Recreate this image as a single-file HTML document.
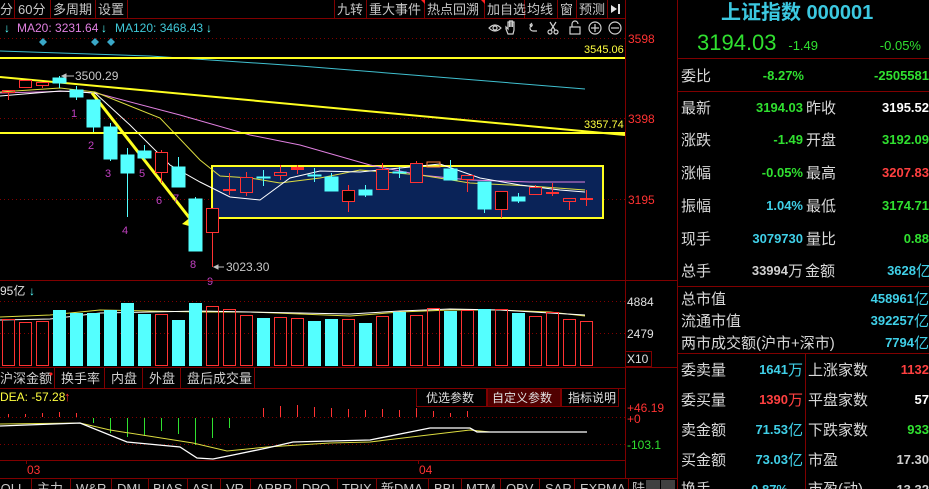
<!DOCTYPE html>
<html><head><meta charset="utf-8"><style>
html,body{margin:0;padding:0;background:#000;width:929px;height:489px;overflow:hidden}
svg{display:block}
text{font-family:"Liberation Sans","Noto Sans CJK SC",sans-serif}
</style></head><body>
<svg width="929" height="489" viewBox="0 0 929 489" xmlns="http://www.w3.org/2000/svg">
<rect width="929" height="489" fill="#000"/>
<!-- toolbar -->
<g stroke="#800000" stroke-width="1" fill="none">
<line x1="0" y1="18.5" x2="625" y2="18.5"/>
<line x1="14.5" y1="0" x2="14.5" y2="18"/><line x1="50.5" y1="0" x2="50.5" y2="18"/><line x1="95.5" y1="0" x2="95.5" y2="18"/><line x1="127.5" y1="0" x2="127.5" y2="18"/>
<line x1="334.5" y1="0" x2="334.5" y2="18"/><line x1="366.5" y1="0" x2="366.5" y2="18"/><line x1="424.5" y1="0" x2="424.5" y2="18"/><line x1="484.5" y1="0" x2="484.5" y2="18"/><line x1="524.5" y1="0" x2="524.5" y2="18"/><line x1="557.5" y1="0" x2="557.5" y2="18"/><line x1="576.5" y1="0" x2="576.5" y2="18"/><line x1="607.5" y1="0" x2="607.5" y2="18"/>
<line x1="625.5" y1="0" x2="625.5" y2="478"/>
<line x1="677.5" y1="0" x2="677.5" y2="489"/>
</g>
<g fill="#c8c8c8" font-size="13">
<text x="0" y="14">分</text><text x="18" y="14">60分</text><text x="53" y="14">多周期</text><text x="98" y="14">设置</text>
<text x="337" y="14">九转</text><text x="369" y="14">重大事件</text><text x="427" y="14">热点回溯</text><text x="487" y="14">加自选</text><text x="527" y="14">均线</text><text x="560" y="14">窗</text><text x="579" y="14">预测</text>
</g>
<path d="M421 0 l4 0 l0 4z M481 0 l4 0 l0 4z" fill="#ff2020"/>
<path d="M611 5 l6 4 l-6 4z M618 4 h2 v10 h-2z" fill="#e0e0e0"/>
<!-- icons -->
<g stroke="#d0d0d0" stroke-width="1.2" fill="none">
<path d="M489 28 q6 -6 12 0 q-6 6 -12 0z"/><circle cx="495" cy="28" r="2"/>
<path d="M508 34 l-2 -5 v-2 l2 2 v-7 h1.5 v5 v-6 h1.5 v6 v-6 h1.5 v6 v-5 h1.5 v8 l-1 4z"/>
<path d="M537 31 h-4 a3 3 0 0 1 0 -6 h-3 M532 23 l-2 2 l2 2"/>
<circle cx="550" cy="32" r="2"/><circle cx="556" cy="32" r="2"/><path d="M551 30 l5 -8 M555 30 l-5 -8"/>
<rect x="570" y="27" width="10" height="7"/><path d="M572 27 v-3 a3 3 0 0 1 6 0"/>
<circle cx="595" cy="28" r="6"/><path d="M591 28 h8 M595 24 v8"/>
<circle cx="615" cy="28" r="6"/><path d="M611 28 h8"/>
</g>
<!-- legend -->
<g font-size="12">
<text x="4" y="32" fill="#54ffff">↓</text>
<text x="17" y="32" fill="#e080e0">MA20: 3231.64</text>
<text x="101" y="32" fill="#54ffff">↓</text>
<text x="115" y="32" fill="#40c8d8">MA120: 3468.43</text>
<text x="206" y="32" fill="#54ffff">↓</text>
</g>
<path d="M43 38 l4 4 l-4 4 l-4 -4z M95 38 l4 4 l-4 4 l-4 -4z M111 38 l4 4 l-4 4 l-4 -4z" fill="#3aa8c8"/>
<!-- grid dotted -->
<g stroke="#800000" stroke-dasharray="1 3" stroke-width="1">
<line x1="0" y1="38.5" x2="625" y2="38.5"/><line x1="0" y1="118.5" x2="625" y2="118.5"/><line x1="0" y1="199.5" x2="625" y2="199.5"/>
<line x1="0" y1="301.5" x2="625" y2="301.5"/><line x1="0" y1="333.5" x2="625" y2="333.5"/>
<line x1="0" y1="417.5" x2="625" y2="417.5"/><line x1="0" y1="444.5" x2="625" y2="444.5"/>
</g>
<g fill="#ff3232" font-size="12">
<text x="628" y="43">3598</text><text x="628" y="123">3398</text><text x="628" y="204">3195</text>
</g>
<!-- box -->
<rect x="212" y="166" width="391" height="52" fill="#0a2358" stroke="#ffff20" stroke-width="2"/>
<!-- MA lines -->
<polyline points="0,51 150,56 300,66 450,78 585,89" fill="none" stroke="#40c0d0" stroke-width="1"/>
<polyline points="0,93 75,91 100,94 180,115 250,135 300,145 370,165 420,175 470,180 530,182 585,182" fill="none" stroke="#e080e0" stroke-width="1"/>
<polyline points="0,92 60,88 95,92 160,118 200,160 220,176 250,178 280,183 320,178 360,170 420,175 470,183 530,186 585,190" fill="none" stroke="#dcdc40" stroke-width="1"/>
<polyline points="0,96 60,91 95,93 130,125 170,165 200,182 230,197 260,200 290,178 320,171 360,172 400,168 440,164 480,178 520,185 560,190 585,192" fill="none" stroke="#ffffff" stroke-width="1"/>
<!-- big lines -->
<line x1="0" y1="58" x2="625" y2="58" stroke="#ffff20" stroke-width="2"/>
<line x1="0" y1="133" x2="625" y2="133" stroke="#ffff20" stroke-width="2"/>
<line x1="0" y1="77" x2="625" y2="135" stroke="#ffff20" stroke-width="2"/>
<line x1="92" y1="93" x2="195" y2="225" stroke="#ffff20" stroke-width="3"/>
<path d="M196 228 l-14 -4 l10 -8z" fill="#ffff20"/>
<text x="584" y="53" fill="#ffff40" font-size="11">3545.06</text>
<text x="584" y="128" fill="#ffff40" font-size="11">3357.74</text>
<!-- candles -->
<g stroke="#ff3232" fill="none" stroke-width="1">
<path d="M8.5 92 v8 M25.5 80 v8 M42.5 82 v6 M161.5 150 v33 M212.5 208 v59 M229.5 173 v22 M246.5 172 v24 M280.5 165 v15 M348.5 185 v27 M382.5 163 v24 M416.5 161 v22 M467.5 175 v17 M501.5 191 v27 M535.5 185 v10 M552.5 183 v13 M569.5 198 v12 M586.5 190 v16 M297.5 165 v9"/>
<rect x="2.5" y="90.5" width="12" height="2"/>
<rect x="19.5" y="80.5" width="12" height="7" fill="#000"/>
<rect x="36.5" y="82.5" width="12" height="3" fill="#000"/>
<rect x="155.5" y="152.5" width="12" height="20" fill="#000"/>
<rect x="206.5" y="208.5" width="12" height="24" fill="#000"/>
<rect x="223.5" y="189.5" width="12" height="1"/>
<rect x="240.5" y="177.5" width="12" height="15" fill="#0a2358"/>
<rect x="274.5" y="172.5" width="12" height="3" fill="#0a2358"/>
<rect x="342.5" y="190.5" width="12" height="11" fill="#000"/>
<rect x="376.5" y="169.5" width="12" height="20" fill="#0a2358"/>
<rect x="410.5" y="163.5" width="12" height="19" fill="#0a2358"/>
<rect x="461.5" y="175.5" width="12" height="4" fill="#0a2358"/>
<rect x="495.5" y="191.5" width="12" height="18" fill="#000"/>
<rect x="529.5" y="187.5" width="12" height="7" fill="#0a2358"/>
<rect x="546.5" y="192.5" width="12" height="1"/>
<rect x="563.5" y="198.5" width="12" height="3" fill="#0a2358"/>
<rect x="580.5" y="198.5" width="12" height="1"/>
</g>
<rect x="291" y="167" width="13" height="3" fill="#ff3030"/>
<rect x="427" y="162" width="13" height="5" fill="none" stroke="#ff8040"/>
<g stroke="#54ffff" fill="#54ffff" stroke-width="1">
<path d="M59.5 76 v12 M76.5 86 v14 M93.5 100 v32 M110.5 123 v38 M127.5 148 v69 M144.5 145 v15 M178.5 157 v30 M195.5 197 v54 M263.5 170 v16 M314.5 168 v14 M331.5 173 v17 M365.5 185 v12 M399.5 167 v11 M450.5 160 v20 M484.5 182 v31 M518.5 193 v10" fill="none"/>
<rect x="53" y="78" width="13" height="5"/><rect x="70" y="90" width="13" height="7"/>
<rect x="87" y="100" width="13" height="27"/><rect x="104" y="127" width="13" height="32"/>
<rect x="121" y="155" width="13" height="18"/><rect x="138" y="151" width="13" height="7"/>
<rect x="172" y="167" width="13" height="20"/><rect x="189" y="199" width="13" height="52"/>
<rect x="257" y="177" width="13" height="1"/><rect x="308" y="175" width="13" height="1"/>
<rect x="325" y="177" width="13" height="14"/><rect x="359" y="190" width="13" height="5"/>
<rect x="393" y="172" width="13" height="1"/><rect x="444" y="169" width="13" height="11"/>
<rect x="478" y="182" width="13" height="27"/><rect x="512" y="197" width="13" height="4"/>
</g>
<g fill="#c040c0" font-size="11">
<text x="71" y="117">1</text><text x="88" y="149">2</text><text x="105" y="177">3</text><text x="122" y="234">4</text><text x="139" y="177">5</text><text x="156" y="204">6</text><text x="173" y="202">7</text><text x="190" y="268">8</text><text x="207" y="285">9</text>
</g>
<path d="M62 76 l4 -2 v4z M66 76 h8" stroke="#c0c0c0" fill="#c0c0c0"/>
<text x="75" y="80" fill="#c8c8c8" font-size="12">3500.29</text>
<path d="M214 267 h10 M214 267 l4 -2 v4z" stroke="#c0c0c0" fill="#c0c0c0"/>
<text x="226" y="271" fill="#c8c8c8" font-size="12">3023.30</text>
<!-- volume -->
<line x1="0" y1="280.5" x2="677" y2="280.5" stroke="#800000"/>
<text x="0" y="295" fill="#e0e0e0" font-size="12">95亿</text><text x="29" y="295" fill="#54ffff" font-size="12">↓</text>
<g id="vol"></g>
<polyline points="0,317 50,315 100,310 150,311 200,312 250,312 300,314 350,316 400,312 450,310 500,310 550,312 585,316" fill="none" stroke="#dcdc40"/>
<polyline points="0,320 50,319 100,313 150,312 200,311 250,312 300,313 350,314 400,311 450,309 500,310 550,313 585,315" fill="none" stroke="#fff"/>
<g fill="#e0e0e0" font-size="12"><text x="627" y="306">4884</text><text x="627" y="338">2479</text><text x="627" y="363">X10</text></g>
<rect x="625.5" y="351.5" width="26" height="15" fill="none" stroke="#800000"/>
<line x1="0" y1="367.5" x2="677" y2="367.5" stroke="#800000"/>
<!-- tabs row -->
<line x1="0" y1="388.5" x2="625" y2="388.5" stroke="#800000"/>
<g stroke="#800000"><line x1="54.5" y1="368" x2="54.5" y2="388"/><line x1="104.5" y1="368" x2="104.5" y2="388"/><line x1="142.5" y1="368" x2="142.5" y2="388"/><line x1="180.5" y1="368" x2="180.5" y2="388"/><line x1="254.5" y1="368" x2="254.5" y2="388"/></g>
<g fill="#d0d0d0" font-size="13"><text x="0" y="383">沪深金额</text><text x="61" y="383">换手率</text><text x="111" y="383">内盘</text><text x="149" y="383">外盘</text><text x="187" y="383">盘后成交量</text></g>
<circle cx="51" cy="374" r="1.5" fill="#ff2020"/>
<rect x="416.5" y="388.5" width="70" height="18" fill="#000" stroke="#800000"/>
<rect x="487.5" y="388.5" width="73" height="18" fill="#500000" stroke="#800000"/>
<rect x="561.5" y="388.5" width="57" height="18" fill="#000" stroke="#800000"/>
<g fill="#e0e0e0" font-size="12"><text x="426" y="402">优选参数</text><text x="492" y="402">自定义参数</text><text x="568" y="402">指标说明</text></g>
<!-- MACD -->
<text x="0" y="401" fill="#ffff40" font-size="12">DEA: -57.28</text><text x="64" y="401" fill="#ff3232" font-size="13">↑</text>
<g fill="#ff3232" font-size="12"><text x="627" y="412">+46.19</text><text x="627" y="423">+0</text></g>
<text x="627" y="449" fill="#30e030" font-size="12">-103.1</text>
<g stroke="#ff3232"><path d="M8.5 414v3 M25.5 414v3 M42.5 413v4 M59.5 412v5 M76.5 413v4 M263.5 408v9 M280.5 406v11 M297.5 405v12 M314.5 407v10 M331.5 408v9 M348.5 409v8 M365.5 410v7 M382.5 409v8 M399.5 410v7 M416.5 408v9 M433.5 411v6 M450.5 413v4 M467.5 411v6"/></g>
<g stroke="#30e030"><path d="M93.5 418v5 M110.5 418v15 M127.5 418v19 M144.5 418v18 M161.5 418v13 M178.5 418v16 M195.5 418v27 M212.5 418v20 M229.5 418v10"/></g>
<polyline points="0,424 80,423 110,430 193,443 227,451 267,447 330,443 370,442 470,430 490,432 587,432" fill="none" stroke="#dcdc40"/>
<polyline points="0,426 80,423 127,442 180,447 197,458 213,459 233,455 267,448 293,442 330,441 370,440 430,428 470,428 477,432 587,432" fill="none" stroke="#fff" stroke-width="1.3"/>
<line x1="0" y1="460.5" x2="625" y2="460.5" stroke="#800000"/>
<line x1="26.5" y1="460" x2="26.5" y2="464" stroke="#800000"/><line x1="418.5" y1="460" x2="418.5" y2="464" stroke="#800000"/>
<text x="27" y="474" fill="#ff3232" font-size="12">03</text><text x="419" y="474" fill="#ff3232" font-size="12">04</text>
<!-- bottom tabs -->
<line x1="0" y1="478.5" x2="677" y2="478.5" stroke="#800000"/>
<g stroke="#800000"><path d="M31.5 478v11 M70.5 478v11 M111.5 478v11 M148.5 478v11 M187.5 478v11 M220.5 478v11 M250.5 478v11 M296.5 478v11 M337.5 478v11 M376.5 478v11 M428.5 478v11 M461.5 478v11 M500.5 478v11 M539.5 478v11 M574.5 478v11 M628.5 478v11"/></g>
<g fill="#c8c8c8" font-size="13"><text x="-8" y="493">BOLL</text><text x="37" y="493">主力</text><text x="76" y="493">W&amp;R</text><text x="117" y="493">DMI</text><text x="153" y="493">BIAS</text><text x="192" y="493">ASI</text><text x="226" y="493">VR</text><text x="256" y="493">ARBR</text><text x="302" y="493">DPO</text><text x="342" y="493">TRIX</text><text x="381" y="493">新DMA</text><text x="434" y="493">BBI</text><text x="466" y="493">MTM</text><text x="506" y="493">OBV</text><text x="545" y="493">SAR</text><text x="580" y="493">EXPMA</text><text x="632" y="493">陆</text></g>
<rect x="646" y="480" width="14" height="9" fill="#404040"/><rect x="661" y="480" width="14" height="9" fill="#404040"/>
<!-- right panel -->
<g stroke="#800000"><line x1="677" y1="58.5" x2="929" y2="58.5"/><line x1="677" y1="91.5" x2="929" y2="91.5"/><line x1="677" y1="286.5" x2="929" y2="286.5"/><line x1="677" y1="353.5" x2="929" y2="353.5"/><line x1="805.5" y1="353" x2="805.5" y2="489"/></g>
<text x="721" y="19" fill="#3cc8e0" font-size="20" font-weight="bold" font-family="Liberation Serif,Noto Serif CJK SC,serif">上证指数 000001</text>
<text x="697" y="50" fill="#30e030" font-size="22" font-family="Liberation Mono,monospace">3194.03</text>
<text x="818" y="50" fill="#30e030" font-size="13" text-anchor="end">-1.49</text>
<text x="921" y="50" fill="#30e030" font-size="13" text-anchor="end">-0.05%</text>
<g font-size="15" fill="#d8d8d8">
<text x="681" y="81">委比</text>
<text x="681" y="113">最新</text><text x="806" y="113">昨收</text>
<text x="681" y="145">涨跌</text><text x="806" y="145">开盘</text>
<text x="681" y="178">涨幅</text><text x="806" y="178">最高</text>
<text x="681" y="211">振幅</text><text x="806" y="211">最低</text>
<text x="681" y="244">现手</text><text x="806" y="244">量比</text>
<text x="681" y="276">总手</text><text x="805" y="276">金额</text>
<text x="681" y="304">总市值</text>
<text x="681" y="326">流通市值</text>
<text x="681" y="348">两市成交额(沪市+深市)</text>
<text x="681" y="375">委卖量</text><text x="808" y="375">上涨家数</text>
<text x="681" y="405">委买量</text><text x="808" y="405">平盘家数</text>
<text x="681" y="435">卖金额</text><text x="808" y="435">下跌家数</text>
<text x="681" y="465">买金额</text><text x="808" y="465">市盈</text>
<text x="681" y="494">换手</text><text x="808" y="494">市盈(动)</text>
</g>
<g font-size="13" font-weight="bold" text-anchor="end">
<text x="804" y="80" fill="#30e030">-8.27%</text><text x="929" y="80" fill="#30e030">-2505581</text>
<text x="803" y="112" fill="#30e030">3194.03</text><text x="929" y="112" fill="#ffffff">3195.52</text>
<text x="803" y="144" fill="#30e030">-1.49</text><text x="929" y="144" fill="#30e030">3192.09</text>
<text x="803" y="177" fill="#30e030">-0.05%</text><text x="929" y="177" fill="#ff4040">3207.83</text>
<text x="803" y="210" fill="#40d0e8">1.04%</text><text x="929" y="210" fill="#30e030">3174.71</text>
<text x="803" y="243" fill="#40d0e8">3079730</text><text x="929" y="243" fill="#30e030">0.88</text>
<text x="788" y="275" fill="#d0d0d0">33994</text><text x="916" y="275" fill="#40d0e8">3628</text>
<text x="914" y="303" fill="#40d0e8">458961</text>
<text x="914" y="325" fill="#40d0e8">392257</text>
<text x="914" y="347" fill="#40d0e8">7794</text>
<text x="788" y="374" fill="#40d0e8">1641</text><text x="929" y="374" fill="#ff4040">1132</text>
<text x="788" y="404" fill="#ff4040">1390</text><text x="929" y="404" fill="#ffffff">57</text>
<text x="788" y="434" fill="#40d0e8">71.53</text><text x="929" y="434" fill="#30e030">933</text>
<text x="788" y="464" fill="#40d0e8">73.03</text><text x="929" y="464" fill="#d0d0d0">17.30</text>
<text x="788" y="494" fill="#40d0e8">0.87%</text><text x="929" y="494" fill="#d0d0d0">13.32</text>
</g>
<g font-size="15" fill="#40d0e8">
<text x="788" y="276" fill="#d0d0d0">万</text><text x="916" y="276">亿</text>
<text x="914" y="304">亿</text><text x="914" y="326">亿</text><text x="914" y="348">亿</text>
<text x="788" y="375">万</text><text x="788" y="405" fill="#ff4040">万</text><text x="788" y="435">亿</text><text x="788" y="465">亿</text>
</g>
<!-- volume bars -->
<g stroke="#ff3232" fill="none">
<rect x="2.5" y="319.5" width="12" height="46"/><rect x="19.5" y="322.5" width="12" height="43"/><rect x="36.5" y="321.5" width="12" height="44"/>
<rect x="155.5" y="314.5" width="12" height="51"/><rect x="206.5" y="306.5" width="12" height="59"/><rect x="223.5" y="309.5" width="12" height="56"/><rect x="240.5" y="315.5" width="12" height="50"/>
<rect x="274.5" y="317.5" width="12" height="48"/><rect x="291.5" y="318.5" width="12" height="47"/><rect x="342.5" y="319.5" width="12" height="46"/><rect x="376.5" y="316.5" width="12" height="49"/>
<rect x="410.5" y="315.5" width="12" height="50"/><rect x="427.5" y="308.5" width="12" height="57"/><rect x="461.5" y="310.5" width="12" height="55"/><rect x="495.5" y="309.5" width="12" height="56"/>
<rect x="529.5" y="316.5" width="12" height="49"/><rect x="546.5" y="312.5" width="12" height="53"/><rect x="563.5" y="319.5" width="12" height="46"/><rect x="580.5" y="321.5" width="12" height="44"/>
</g>
<g fill="#54ffff">
<rect x="53" y="310" width="13" height="56"/><rect x="70" y="313" width="13" height="53"/><rect x="87" y="313" width="13" height="53"/><rect x="104" y="310" width="13" height="56"/>
<rect x="121" y="303" width="13" height="63"/><rect x="138" y="314" width="13" height="52"/><rect x="172" y="320" width="13" height="46"/><rect x="189" y="303" width="13" height="63"/>
<rect x="257" y="318" width="13" height="48"/><rect x="308" y="321" width="13" height="45"/><rect x="325" y="319" width="13" height="47"/><rect x="359" y="323" width="13" height="43"/>
<rect x="393" y="312" width="13" height="54"/><rect x="444" y="311" width="13" height="55"/><rect x="478" y="309" width="13" height="57"/><rect x="512" y="313" width="13" height="53"/>
</g>
</svg>
</body></html>
